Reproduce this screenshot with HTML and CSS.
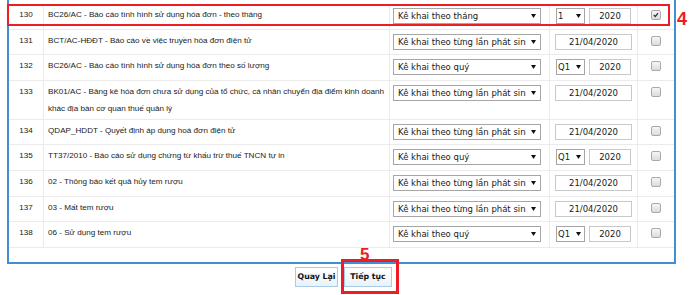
FILE: index.html
```html
<!DOCTYPE html>
<html lang="vi">
<head>
    <meta charset="UTF-8">
    <title>Chọn tờ khai</title>
    <link rel="stylesheet" href="styles.css">
</head>
<body>
<div class="page">
    <div class="panel">
        <div class="row">
            <div class="num">130</div>
            <div class="name">BC26/AC - Báo cáo tình hình sử dụng hóa đơn - theo tháng</div>
            <div class="kind"><span class="pick"><select class="wide"><option>Kê khai theo tháng</option></select><svg class="caret" viewBox="0 0 5 4"><polygon points="0,0 5,0 2.5,4"/></svg></span></div>
            <div class="period"><span class="pick"><select class="short"><option>1</option></select><svg class="caret" viewBox="0 0 5 4"><polygon points="0,0 5,0 2.5,4"/></svg></span><input class="year" value="2020"></div>
            <div class="mark"><span class="box checked"><svg viewBox="0 0 9 9"><path d="M2 4.6 L3.7 6.2 L6.8 2.4"/></svg></span></div>
        </div>
        <div class="row">
            <div class="num">131</div>
            <div class="name">BCT/AC-HĐĐT - Báo cáo về việc truyền hóa đơn điện tử</div>
            <div class="kind"><span class="pick"><select class="wide"><option>Kê khai theo từng lần phát sinh</option></select><svg class="caret" viewBox="0 0 5 4"><polygon points="0,0 5,0 2.5,4"/></svg></span></div>
            <div class="period"><input class="date" value="21/04/2020"></div>
            <div class="mark"><span class="box"></span></div>
        </div>
        <div class="row">
            <div class="num">132</div>
            <div class="name">BC26/AC - Báo cáo tình hình sử dụng hóa đơn theo số lượng</div>
            <div class="kind"><span class="pick"><select class="wide"><option>Kê khai theo quý</option></select><svg class="caret" viewBox="0 0 5 4"><polygon points="0,0 5,0 2.5,4"/></svg></span></div>
            <div class="period"><span class="pick"><select class="short"><option>Q1</option></select><svg class="caret" viewBox="0 0 5 4"><polygon points="0,0 5,0 2.5,4"/></svg></span><input class="year" value="2020"></div>
            <div class="mark"><span class="box"></span></div>
        </div>
        <div class="row">
            <div class="num">133</div>
            <div class="name">BK01/AC - Bảng kê hóa đơn chưa sử dụng của tổ chức, cá nhân chuyển địa điểm kinh doanh khác địa bàn cơ quan thuế quản lý</div>
            <div class="kind"><span class="pick"><select class="wide"><option>Kê khai theo từng lần phát sinh</option></select><svg class="caret" viewBox="0 0 5 4"><polygon points="0,0 5,0 2.5,4"/></svg></span></div>
            <div class="period"><input class="date" value="21/04/2020"></div>
            <div class="mark"><span class="box"></span></div>
        </div>
        <div class="row">
            <div class="num">134</div>
            <div class="name">QDAP_HDDT - Quyết định áp dụng hoá đơn điện tử</div>
            <div class="kind"><span class="pick"><select class="wide"><option>Kê khai theo từng lần phát sinh</option></select><svg class="caret" viewBox="0 0 5 4"><polygon points="0,0 5,0 2.5,4"/></svg></span></div>
            <div class="period"><input class="date" value="21/04/2020"></div>
            <div class="mark"><span class="box"></span></div>
        </div>
        <div class="row">
            <div class="num">135</div>
            <div class="name">TT37/2010 - Báo cáo sử dụng chứng từ khấu trừ thuế TNCN tự in</div>
            <div class="kind"><span class="pick"><select class="wide"><option>Kê khai theo quý</option></select><svg class="caret" viewBox="0 0 5 4"><polygon points="0,0 5,0 2.5,4"/></svg></span></div>
            <div class="period"><span class="pick"><select class="short"><option>Q1</option></select><svg class="caret" viewBox="0 0 5 4"><polygon points="0,0 5,0 2.5,4"/></svg></span><input class="year" value="2020"></div>
            <div class="mark"><span class="box"></span></div>
        </div>
        <div class="row">
            <div class="num">136</div>
            <div class="name">02 - Thông báo kết quả hủy tem rượu</div>
            <div class="kind"><span class="pick"><select class="wide"><option>Kê khai theo từng lần phát sinh</option></select><svg class="caret" viewBox="0 0 5 4"><polygon points="0,0 5,0 2.5,4"/></svg></span></div>
            <div class="period"><input class="date" value="21/04/2020"></div>
            <div class="mark"><span class="box"></span></div>
        </div>
        <div class="row">
            <div class="num">137</div>
            <div class="name">03 - Mất tem rượu</div>
            <div class="kind"><span class="pick"><select class="wide"><option>Kê khai theo từng lần phát sinh</option></select><svg class="caret" viewBox="0 0 5 4"><polygon points="0,0 5,0 2.5,4"/></svg></span></div>
            <div class="period"><input class="date" value="21/04/2020"></div>
            <div class="mark"><span class="box"></span></div>
        </div>
        <div class="row">
            <div class="num">138</div>
            <div class="name">06 - Sử dụng tem rượu</div>
            <div class="kind"><span class="pick"><select class="wide"><option>Kê khai theo quý</option></select><svg class="caret" viewBox="0 0 5 4"><polygon points="0,0 5,0 2.5,4"/></svg></span></div>
            <div class="period"><span class="pick"><select class="short"><option>Q1</option></select><svg class="caret" viewBox="0 0 5 4"><polygon points="0,0 5,0 2.5,4"/></svg></span><input class="year" value="2020"></div>
            <div class="mark"><span class="box"></span></div>
        </div>
    </div>

    <div class="actions">
        <button class="btn back">Quay Lại</button>
        <button class="btn next">Tiếp tục</button>
    </div>

    <!-- hand-drawn annotations -->
    <div class="note-box row-note"></div>
    <div class="note-num num-4">4</div>
    <div class="note-box btn-note"></div>
    <div class="note-num num-5">5</div>
</div>
</body>
</html>
```

FILE: styles.css
```css
body {
    margin: 0;
    background: #ffffff;
    font-family: "Liberation Sans", Arial, sans-serif;
    font-size: 8.1px;
    color: #1a1a1a;
}

.page {
    position: relative;
    width: 700px;
    height: 295px;
    overflow: hidden;
}

.panel {
    margin-left: 7px;
    width: 665px;
    border: 2px solid #3f8fd2;
    border-top: 0;
    padding: 4px 0 14px;
}

.row {
    display: grid;
    grid-template-columns: 35px 346px 160px 88px 36px;
    min-height: 25.6px;
    box-sizing: border-box;
    border-bottom: 1px solid #ebebeb;
}

.row > div {
    padding: 2px 4px;
    line-height: 17px;
    border-right: 1px solid #ebebeb;
}

.row > div:last-child {
    border-right: 0;
}

.num {
    text-align: center;
}

.row > .name {
    padding-right: 2px;
}

.row > .kind {
    padding-left: 3px;
}

.row > .period {
    padding: 2px 0;
    display: flex;
    justify-content: center;
    align-items: flex-start;
}

.row > .mark {
    padding: 2px 0;
    text-align: center;
}

.pick {
    position: relative;
    display: inline-block;
    vertical-align: top;
    margin-top: 2px;
    height: 16px;
}

select, input {
    font-family: "DejaVu Sans", Verdana, sans-serif;
    font-size: 8.5px;
    color: #1a1a1a;
    height: 16px;
    box-sizing: border-box;
    margin: 0;
    outline: none;
}

select {
    appearance: none;
    -webkit-appearance: none;
    border: 1px solid #a6a6a6;
    border-radius: 0;
    background: #ffffff;
    padding: 0 14px 0 4px;
    line-height: 14px;
}

select.wide {
    width: 148px;
}

select.short {
    width: 29px;
    padding: 0 8px 0 1px;
}

.caret {
    position: absolute;
    right: 5px;
    top: 6px;
    width: 5px;
    height: 4px;
    fill: #111111;
}

.short + .caret {
    right: 4px;
}

input {
    border: 1px solid #c9c9c9;
    background: #ffffff;
    text-align: center;
    padding: 0;
    margin-top: 2px;
}

input.year {
    width: 42px;
    margin-left: 4px;
}

input.date {
    width: 77px;
}

.box {
    display: inline-block;
    vertical-align: top;
    width: 10px;
    height: 10px;
    margin-top: 4px;
    box-sizing: border-box;
    border: 1px solid #a9a9a9;
    border-radius: 2px;
    background: linear-gradient(#f6f6f6, #dcdcdc);
}

.box svg {
    display: block;
    width: 8px;
    height: 8px;
    fill: none;
    stroke: #333333;
    stroke-width: 1.5;
}

.actions {
    display: flex;
    justify-content: center;
    gap: 6px;
    padding: 3px 0 0 4px;
    width: 679px;
}

.btn {
    height: 20px;
    padding: 0;
    border: 1px solid #a8cbe8;
    background: linear-gradient(#ffffff, #e9f2fa);
    font-family: "DejaVu Sans", Verdana, sans-serif;
    font-weight: bold;
    font-size: 7.8px;
    color: #111111;
}

.back {
    width: 43px;
}

.next {
    width: 48px;
}

.note-box {
    position: absolute;
    box-sizing: border-box;
    border: 2px solid #ee1c24;
}

.row-note {
    left: 7px;
    top: 4px;
    width: 663px;
    height: 22px;
}

.btn-note {
    left: 341px;
    top: 259px;
    width: 58px;
    height: 35px;
    border-width: 3px;
}

.note-num {
    position: absolute;
    font-family: "Liberation Sans", Arial, sans-serif;
    font-weight: bold;
    line-height: 1;
    color: #ee1c24;
}

.num-4 {
    left: 677px;
    top: 10px;
    font-size: 18px;
}

.num-5 {
    left: 360px;
    top: 246px;
    font-size: 17px;
}
```
